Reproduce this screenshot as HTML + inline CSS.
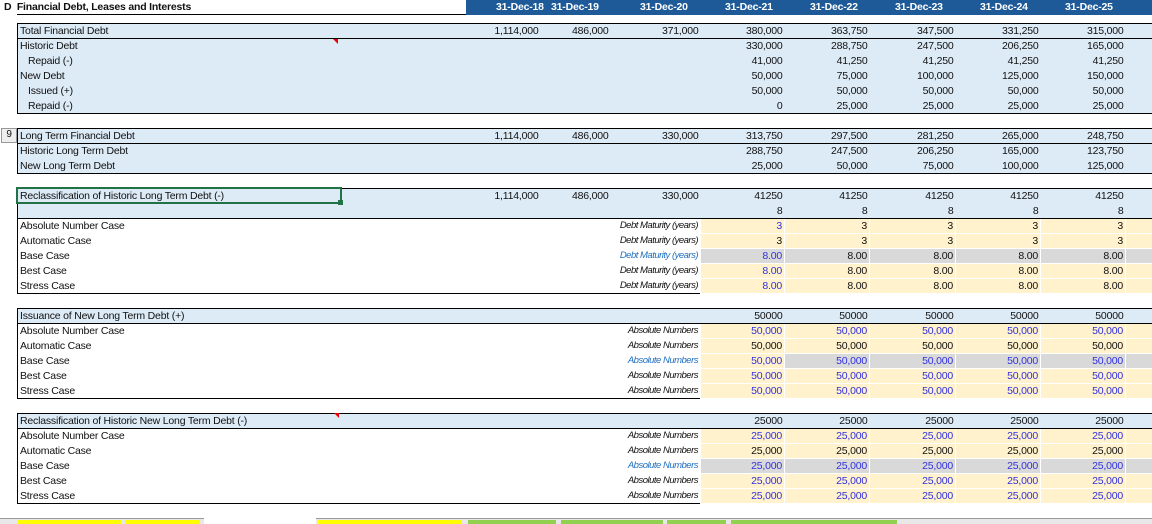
<!DOCTYPE html>
<html><head><meta charset="utf-8"><style>
*{margin:0;padding:0;box-sizing:border-box}
body{width:1152px;height:524px;overflow:hidden;background:#fff;font-family:"Liberation Sans",sans-serif;font-size:10.5px;color:#111;position:relative;letter-spacing:-0.2px}
.a{position:absolute}
.hdr{left:466px;top:0;width:686px;height:15px;background:#1e5a97}
.hdr span{position:absolute;top:1px;color:#fff;font-weight:bold;font-size:10.5px}
table{position:absolute;left:17px;border-collapse:collapse;table-layout:fixed;width:1140px}
td{height:15px;line-height:14px;padding:0 2px;white-space:nowrap;overflow:hidden;text-align:right}
td.l{text-align:left;padding-left:2px}
td.i{padding-left:10px;text-align:left}
.blue td{background:#ddebf7}
.box{border:1px solid #000;border-right:none}
tr.b td{border-bottom:1px solid #000}
td.y{background:#fff2cc;border-left:1px solid #fff;border-bottom:1px solid #fff}
td.g{background:#d9d9d9;border-left:1px solid #fff;border-bottom:1px solid #fff}
.it{font-style:italic;font-size:9.5px;letter-spacing:-0.5px}
.ib{color:#1f6fc0}
.bl{color:#3030e0}
</style></head><body>
<div class="a" style="left:4px;top:1px;font-weight:bold;font-size:10.5px">D&nbsp;&nbsp;Financial Debt, Leases and Interests</div>
<div class="a" style="left:17px;top:14px;width:449px;border-top:1px solid #000"></div>
<div class="a hdr">
<span style="left:30px">31-Dec-18</span><span style="left:85px">31-Dec-19</span><span style="left:174px">31-Dec-20</span><span style="left:259px">31-Dec-21</span><span style="left:344px">31-Dec-22</span><span style="left:429px">31-Dec-23</span><span style="left:514px">31-Dec-24</span><span style="left:599px">31-Dec-25</span>
</div>
<colgroup></colgroup>

<table class="box blue" style="top:23px">
<colgroup><col style="width:449px"><col style="width:74px"><col style="width:70px"><col style="width:90px"><col style="width:84px"><col style="width:85px"><col style="width:86px"><col style="width:85px"><col style="width:85px"><col style="width:32px"></colgroup>
<tr class="b"><td class="l">Total Financial Debt</td><td>1,114,000</td><td>486,000</td><td>371,000</td><td>380,000</td><td>363,750</td><td>347,500</td><td>331,250</td><td>315,000</td><td></td></tr>
<tr><td class="l">Historic Debt</td><td></td><td></td><td></td><td>330,000</td><td>288,750</td><td>247,500</td><td>206,250</td><td>165,000</td><td></td></tr>
<tr><td class="i">Repaid (-)</td><td></td><td></td><td></td><td>41,000</td><td>41,250</td><td>41,250</td><td>41,250</td><td>41,250</td><td></td></tr>
<tr><td class="l">New Debt</td><td></td><td></td><td></td><td>50,000</td><td>75,000</td><td>100,000</td><td>125,000</td><td>150,000</td><td></td></tr>
<tr><td class="i">Issued (+)</td><td></td><td></td><td></td><td>50,000</td><td>50,000</td><td>50,000</td><td>50,000</td><td>50,000</td><td></td></tr>
<tr><td class="i">Repaid (-)</td><td></td><td></td><td></td><td>0</td><td>25,000</td><td>25,000</td><td>25,000</td><td>25,000</td><td></td></tr>
</table>

<div class="a" style="left:1px;top:128px;width:16px;height:15px;background:#eee;border:1px solid #999;font-size:10px;text-align:center">9</div>
<table class="box blue" style="top:128px">
<colgroup><col style="width:449px"><col style="width:74px"><col style="width:70px"><col style="width:90px"><col style="width:84px"><col style="width:85px"><col style="width:86px"><col style="width:85px"><col style="width:85px"><col style="width:32px"></colgroup>
<tr class="b"><td class="l">Long Term Financial Debt</td><td>1,114,000</td><td>486,000</td><td>330,000</td><td>313,750</td><td>297,500</td><td>281,250</td><td>265,000</td><td>248,750</td><td></td></tr>
<tr><td class="l">Historic Long Term Debt</td><td></td><td></td><td></td><td>288,750</td><td>247,500</td><td>206,250</td><td>165,000</td><td>123,750</td><td></td></tr>
<tr><td class="l">New Long Term Debt</td><td></td><td></td><td></td><td>25,000</td><td>50,000</td><td>75,000</td><td>100,000</td><td>125,000</td><td></td></tr>
</table>

<table class="box" style="top:188px">
<colgroup><col style="width:449px"><col style="width:74px"><col style="width:70px"><col style="width:90px"><col style="width:84px"><col style="width:85px"><col style="width:86px"><col style="width:85px"><col style="width:85px"><col style="width:32px"></colgroup>
<tr class="blue"><td class="l">Reclassification of Historic Long Term Debt (-)</td><td>1,114,000</td><td>486,000</td><td>330,000</td><td>41250</td><td>41250</td><td>41250</td><td>41250</td><td>41250</td><td></td></tr>
<tr class="blue b"><td></td><td></td><td></td><td></td><td>8</td><td>8</td><td>8</td><td>8</td><td>8</td><td></td></tr>
<tr><td class="l">Absolute Number Case</td><td></td><td></td><td class="it">Debt Maturity (years)</td><td class="y bl">3</td><td class="y">3</td><td class="y">3</td><td class="y">3</td><td class="y">3</td><td class="y"></td></tr>
<tr><td class="l">Automatic Case</td><td></td><td></td><td class="it">Debt Maturity (years)</td><td class="y">3</td><td class="y">3</td><td class="y">3</td><td class="y">3</td><td class="y">3</td><td class="y"></td></tr>
<tr><td class="l">Base Case</td><td></td><td></td><td class="it ib">Debt Maturity (years)</td><td class="g bl">8.00</td><td class="g">8.00</td><td class="g">8.00</td><td class="g">8.00</td><td class="g">8.00</td><td class="g"></td></tr>
<tr><td class="l">Best Case</td><td></td><td></td><td class="it">Debt Maturity (years)</td><td class="y bl">8.00</td><td class="y">8.00</td><td class="y">8.00</td><td class="y">8.00</td><td class="y">8.00</td><td class="y"></td></tr>
<tr><td class="l">Stress Case</td><td></td><td></td><td class="it">Debt Maturity (years)</td><td class="y bl">8.00</td><td class="y">8.00</td><td class="y">8.00</td><td class="y">8.00</td><td class="y">8.00</td><td class="y"></td></tr>
</table>
<div class="a" style="left:16px;top:187px;width:326px;height:17px;border:2px solid #217346"></div>
<div class="a" style="left:338px;top:200px;width:5px;height:5px;background:#217346"></div>

<table class="box" style="top:308px">
<colgroup><col style="width:449px"><col style="width:74px"><col style="width:70px"><col style="width:90px"><col style="width:84px"><col style="width:85px"><col style="width:86px"><col style="width:85px"><col style="width:85px"><col style="width:32px"></colgroup>
<tr class="blue b"><td class="l">Issuance of New Long Term Debt (+)</td><td></td><td></td><td></td><td>50000</td><td>50000</td><td>50000</td><td>50000</td><td>50000</td><td></td></tr>
<tr class="bl"><td class="l" style="color:#111">Absolute Number Case</td><td></td><td></td><td class="it" style="color:#111">Absolute Numbers</td><td class="y">50,000</td><td class="y">50,000</td><td class="y">50,000</td><td class="y">50,000</td><td class="y">50,000</td><td class="y"></td></tr>
<tr><td class="l">Automatic Case</td><td></td><td></td><td class="it">Absolute Numbers</td><td class="y">50,000</td><td class="y">50,000</td><td class="y">50,000</td><td class="y">50,000</td><td class="y">50,000</td><td class="y"></td></tr>
<tr class="bl"><td class="l" style="color:#111">Base Case</td><td></td><td></td><td class="it ib">Absolute Numbers</td><td class="y">50,000</td><td class="g">50,000</td><td class="g">50,000</td><td class="g">50,000</td><td class="g">50,000</td><td class="g"></td></tr>
<tr class="bl"><td class="l" style="color:#111">Best Case</td><td></td><td></td><td class="it" style="color:#111">Absolute Numbers</td><td class="y">50,000</td><td class="y">50,000</td><td class="y">50,000</td><td class="y">50,000</td><td class="y">50,000</td><td class="y"></td></tr>
<tr class="bl"><td class="l" style="color:#111">Stress Case</td><td></td><td></td><td class="it" style="color:#111">Absolute Numbers</td><td class="y">50,000</td><td class="y">50,000</td><td class="y">50,000</td><td class="y">50,000</td><td class="y">50,000</td><td class="y"></td></tr>
</table>

<table class="box" style="top:413px">
<colgroup><col style="width:449px"><col style="width:74px"><col style="width:70px"><col style="width:90px"><col style="width:84px"><col style="width:85px"><col style="width:86px"><col style="width:85px"><col style="width:85px"><col style="width:32px"></colgroup>
<tr class="blue b"><td class="l">Reclassification of Historic New Long Term Debt (-)</td><td></td><td></td><td></td><td>25000</td><td>25000</td><td>25000</td><td>25000</td><td>25000</td><td></td></tr>
<tr class="bl"><td class="l" style="color:#111">Absolute Number Case</td><td></td><td></td><td class="it" style="color:#111">Absolute Numbers</td><td class="y">25,000</td><td class="y">25,000</td><td class="y">25,000</td><td class="y">25,000</td><td class="y">25,000</td><td class="y"></td></tr>
<tr><td class="l">Automatic Case</td><td></td><td></td><td class="it">Absolute Numbers</td><td class="y">25,000</td><td class="y">25,000</td><td class="y">25,000</td><td class="y">25,000</td><td class="y">25,000</td><td class="y"></td></tr>
<tr class="bl"><td class="l" style="color:#111">Base Case</td><td></td><td></td><td class="it ib">Absolute Numbers</td><td class="g">25,000</td><td class="g">25,000</td><td class="g">25,000</td><td class="g">25,000</td><td class="g">25,000</td><td class="g"></td></tr>
<tr class="bl"><td class="l" style="color:#111">Best Case</td><td></td><td></td><td class="it" style="color:#111">Absolute Numbers</td><td class="y">25,000</td><td class="y">25,000</td><td class="y">25,000</td><td class="y">25,000</td><td class="y">25,000</td><td class="y"></td></tr>
<tr class="bl"><td class="l" style="color:#111">Stress Case</td><td></td><td></td><td class="it" style="color:#111">Absolute Numbers</td><td class="y">25,000</td><td class="y">25,000</td><td class="y">25,000</td><td class="y">25,000</td><td class="y">25,000</td><td class="y"></td></tr>
</table>

<div class="a" style="left:333px;top:39px;border-left:5px solid transparent;border-top:5px solid #e00"></div>
<div class="a" style="left:334px;top:413px;border-left:5px solid transparent;border-top:5px solid #e00"></div>

<div class="a" style="left:0;top:518px;width:204px;height:6px;background:#e8e8e8;border-top:1px solid #999"></div>
<div class="a" style="left:17px;top:520px;width:104px;height:4px;background:#ffff00"></div>
<div class="a" style="left:125px;top:520px;width:75px;height:4px;background:#ffff00"></div>
<div class="a" style="left:316px;top:518px;width:836px;height:6px;background:#e8e8e8;border-top:1px solid #999"></div>
<div class="a" style="left:318px;top:520px;width:144px;height:4px;background:#ffff00"></div>
<div class="a" style="left:468px;top:520px;width:88px;height:4px;background:#92d050"></div>
<div class="a" style="left:561px;top:520px;width:102px;height:4px;background:#92d050"></div>
<div class="a" style="left:667px;top:520px;width:59px;height:4px;background:#92d050"></div>
<div class="a" style="left:731px;top:520px;width:166px;height:4px;background:#92d050"></div>
</body></html>
